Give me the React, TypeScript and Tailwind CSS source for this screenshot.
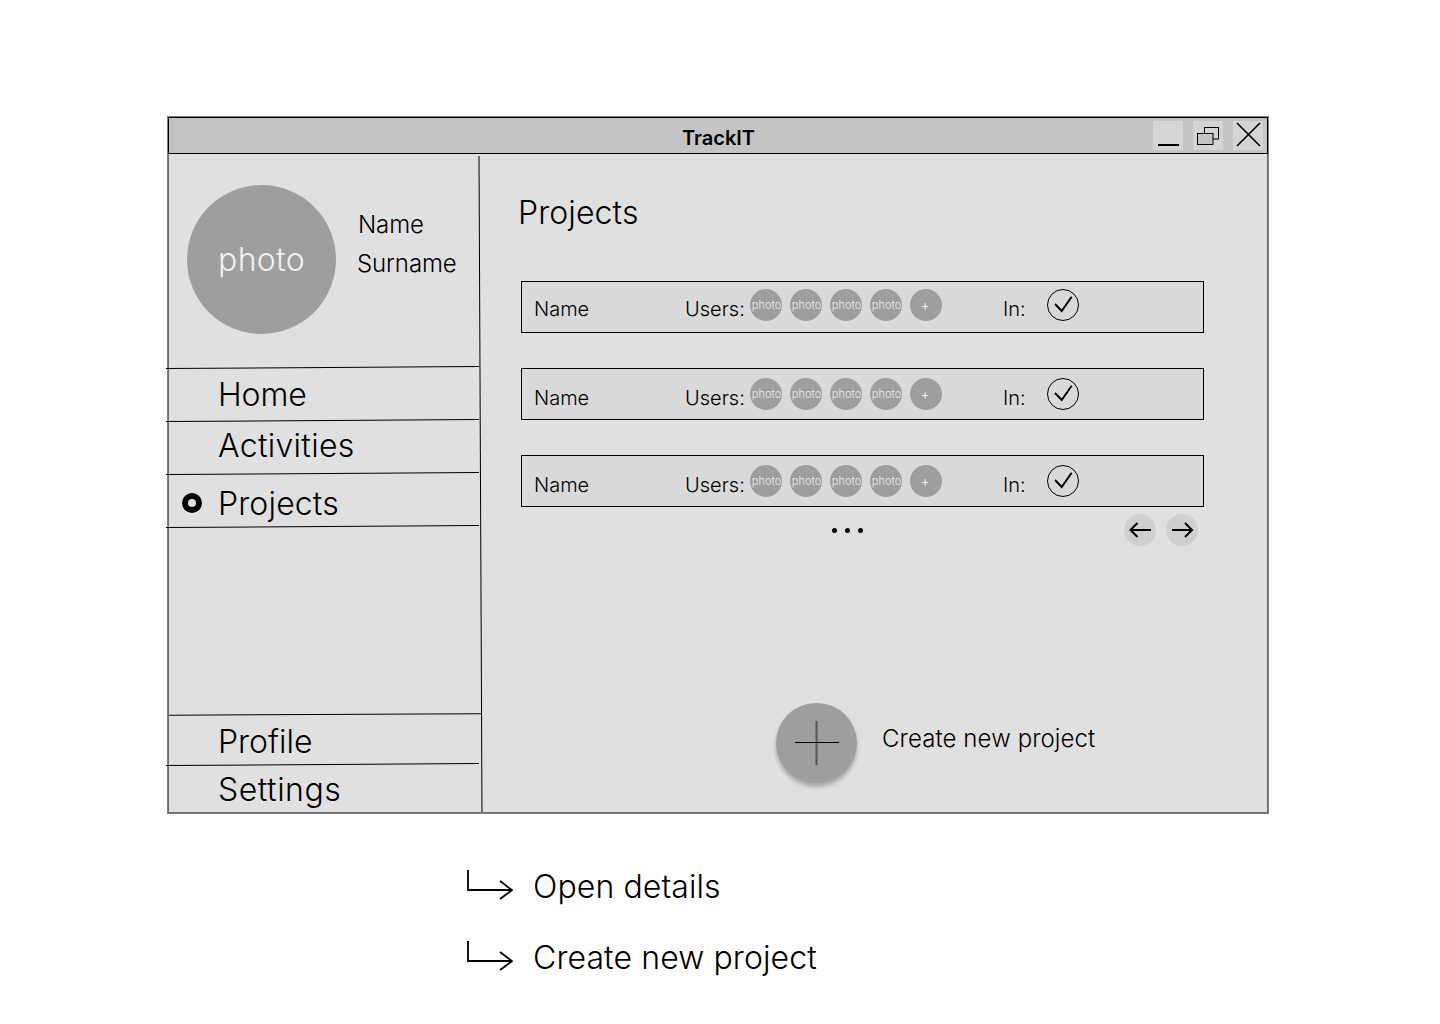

const Sep = ({ className = "" }: { className?: string }) => (
  <div className={`h-px shrink-0 bg-black ${className}`} />
);

const NavItem = ({ label, active, h, tm }: { label: string; active?: boolean; h: string; tm: string }) => (
  <div className={`flex items-center pl-[13px] ${h}`}>
    <div className="w-[36px] shrink-0">
      {active && <div className="mt-[6px] h-[20px] w-[20px] rounded-full border-[6px] border-black bg-[#e0e0e0]" />}
    </div>
    <span className={`text-[32px] leading-none font-light text-black ${tm}`}>{label}</span>
  </div>
);

const Avatar = ({ label }: { label: string }) => (
  <div className="flex h-8 w-8 shrink-0 items-center justify-center overflow-hidden rounded-full bg-[#9e9e9e] pl-px text-[11px] leading-none font-light text-[#ebebeb]">
    {label}
  </div>
);

const Plus = () => (
  <div className="flex h-8 w-8 shrink-0 items-center justify-center rounded-full bg-[#9e9e9e] pr-[2px] text-[14px] leading-none font-light text-white">
    +
  </div>
);

const Row = ({ mt, textMt, iconMt }: { mt: string; textMt: string; iconMt: string }) => (
  <div className={`flex h-[52px] w-[683px] shrink-0 items-center border border-black bg-[#d9d9d9] pl-[12px] ${mt}`}>
    <span className={`w-[151px] shrink-0 text-[20px] leading-none font-light ${textMt}`}>Name</span>
    <span className={`w-[65px] shrink-0 text-[20px] leading-none font-light ${textMt}`}>Users:</span>
    <div className={`flex w-[253px] shrink-0 gap-2 ${iconMt}`}>
      <Avatar label="photo" />
      <Avatar label="photo" />
      <Avatar label="photo" />
      <Avatar label="photo" />
      <Plus />
    </div>
    <span className={`w-[44px] shrink-0 text-[20px] leading-none font-light ${textMt}`}>In:</span>
    <svg className={iconMt} width="32" height="32" viewBox="0 0 32 32" fill="none" stroke="#000">
      <circle cx="16" cy="16" r="15.5" />
      <path d="M8 15 L14.7 22 L24.7 7.7" strokeWidth="2" />
    </svg>
  </div>
);

const Note = ({ text, mt }: { text: string; mt: string }) => (
  <div className={`flex items-center ${mt}`}>
    <svg width="46" height="32" viewBox="0 0 46 32" fill="none" stroke="#000" strokeWidth="1.8" className="-mt-[4px] shrink-0">
      <path d="M1 1 V21 H45 M33 12 L45 21 L33 30" />
    </svg>
    <span className="ml-[20px] text-[32px] leading-none font-light tracking-[0.1px] text-black">{text}</span>
  </div>
);

export default function App() {
  return (
    <div className="h-[1024px] w-[1440px] overflow-hidden bg-white pt-[116px] pl-[167px] font-['Inter',sans-serif] text-black">
      <div className="flex h-[698px] w-[1102px] flex-col border border-[#808080] bg-[#e0e0e0]">
        <div className="relative flex h-[37px] shrink-0 items-center border border-black bg-[#c4c4c4]">
          <span className="w-full pt-[5px] pl-[1px] text-center text-[20px] leading-none font-semibold">TrackIT</span>
          <div className="absolute top-[3px] right-[4px] flex gap-[10px]">
            <div className="flex h-[29px] w-[30px] items-end justify-center bg-[#d4d4d4] pb-[4px]">
              <div className="h-[2px] w-[21px] bg-black" />
            </div>
            <div className="flex h-[29px] w-[30px] items-center justify-center bg-[#d4d4d4]">
              <svg width="22" height="18" viewBox="0 0 22 18" fill="none" stroke="#000">
                <rect x="7.5" y="0.5" width="14" height="11.5" />
                <rect x="0.5" y="6.5" width="15.5" height="11" fill="#c4c4c4" />
              </svg>
            </div>
            <div className="flex h-[29px] w-[30px] items-center justify-center bg-[#d4d4d4]">
              <svg className="-mt-[3px]" width="25" height="25" viewBox="0 0 25 25" fill="none" stroke="#000" strokeWidth="1.6">
                <path d="M1 1 L24 24 M24 1 L1 24" />
              </svg>
            </div>
          </div>
        </div>

        <div className="flex min-h-0 flex-1 border-x border-b border-x-[#6e6e6e] border-b-[#6e6e6e]">
          <div className="flex w-[311px] shrink-0 flex-col">
            <div className="flex h-[213px] shrink-0 pt-[31px] pl-[18px]">
              <div className="flex h-[149px] w-[149px] shrink-0 items-center justify-center rounded-full bg-[#9e9e9e] text-[32px] font-light tracking-[0.3px] text-[#f0f0f0]">
                photo
              </div>
              <div className="ml-[21px] pt-[28px] text-[24px] leading-none font-light tracking-[-0.1px]">
                <div className="ml-[1px]">Name</div>
                <div className="mt-[15px]">Surname</div>
              </div>
            </div>
            <Sep className="-ml-[3px] w-[313px] rotate-[-0.37deg]" />
            <NavItem label="Home" h="h-[52px]" tm="mt-[2px] tracking-[-0.1px]" />
            <Sep className="-ml-[3px] w-[313px] rotate-[-0.37deg]" />
            <NavItem label="Activities" h="h-[52px]" tm="-mt-[2px] tracking-[0.3px]" />
            <Sep className="-ml-[3px] w-[313px] rotate-[-0.37deg]" />
            <NavItem label="Projects" active h="h-[52px]" tm="mt-[8px] tracking-[0.15px]" />
            <Sep className="-ml-[3px] w-[313px] rotate-[-0.37deg]" />
            <div className="h-[187px] shrink-0" />
            <Sep className="w-[313px] rotate-[-0.3deg]" />
            <NavItem label="Profile" h="h-[49px]" tm="mt-[4px] tracking-[0px]" />
            <Sep className="-ml-[3px] w-[313px] rotate-[-0.4deg]" />
            <NavItem label="Settings" h="h-[47px]" tm="mt-[3px] tracking-[0.5px]" />
          </div>

          <div className="mt-[2px] h-[656px] w-px shrink-0 rotate-[-0.26deg] bg-black" />

          <div className="flex min-w-0 flex-1 flex-col pl-[40px]">
            <div className="-ml-[3px] pt-[43px] text-[32px] leading-none font-light tracking-[0.1px]">Projects</div>
            <Row mt="mt-[52px]" textMt="mt-[4px]" iconMt="-mt-[4px]" />
            <Row mt="mt-[35px]" textMt="mt-[8px]" iconMt="mt-0" />
            <Row mt="mt-[35px]" textMt="mt-[8px]" iconMt="mt-0" />
            <div className="mt-[7px] flex h-[32px] w-[677px] shrink-0 items-center justify-between">
              <div className="ml-[311px] flex gap-2">
                <div className="h-[5px] w-[5px] rounded-full bg-black" />
                <div className="h-[5px] w-[5px] rounded-full bg-black" />
                <div className="h-[5px] w-[5px] rounded-full bg-black" />
              </div>
              <div className="flex gap-[10px]">
                <div className="flex h-8 w-8 items-center justify-center rounded-full bg-[#cfcfcf]">
                  <svg width="24" height="20" viewBox="0 0 24 20" fill="none" stroke="#000" strokeWidth="2">
                    <path d="M23 10 H2 M9.5 3 L2.5 10 L9.5 17" />
                  </svg>
                </div>
                <div className="flex h-8 w-8 items-center justify-center rounded-full bg-[#cfcfcf]">
                  <svg width="24" height="20" viewBox="0 0 24 20" fill="none" stroke="#000" strokeWidth="2">
                    <path d="M2 10 H22 M15 3 L22 10 L15 17" />
                  </svg>
                </div>
              </div>
            </div>
            <div className="mt-[157px] flex items-center pl-[255px]">
              <div className="flex h-[80px] w-[81px] shrink-0 items-center justify-center rounded-full bg-[#9e9e9e] shadow-[0_4px_4px_rgba(0,0,0,0.25)]">
                <svg width="44" height="44" viewBox="0 0 44 44" fill="none">
                  <path d="M21.5 0 V44" stroke="#555" strokeWidth="2" />
                  <path d="M0 21.5 H44" stroke="#000" strokeWidth="1" />
                </svg>
              </div>
              <span className="-mt-[8px] ml-[25px] text-[24px] leading-none font-light tracking-[0.1px]">Create new project</span>
            </div>
          </div>
        </div>
      </div>

      <div className="ml-[300px] flex flex-col">
        <Note text="Open details" mt="mt-[57px]" />
        <Note text="Create new project" mt="mt-[39px]" />
      </div>
    </div>
  );
}
